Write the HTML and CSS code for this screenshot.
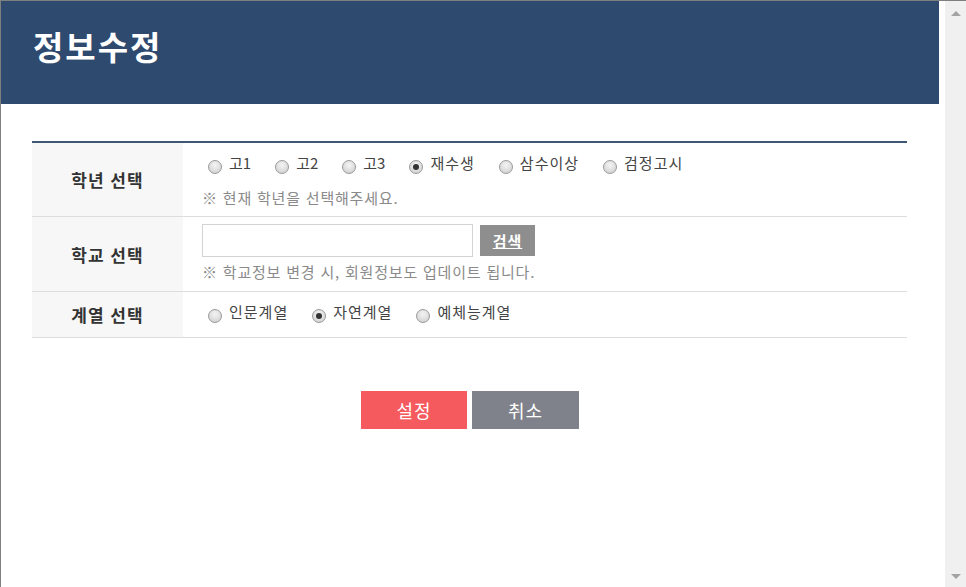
FILE: index.html
```html
<!DOCTYPE html>
<html lang="ko">
<head>
    <meta charset="UTF-8">
    <meta name="viewport" content="width=device-width, initial-scale=1.0">
    <title>정보수정</title>
    <link rel="stylesheet" href="styles.css">
</head>

<body>
    <div class="window">
        <div class="page">
            <div class="title-bar">
                <h1>정보수정</h1>
            </div>

            <div class="content">
                <div class="form-table">
                    <div class="row row-grade">
                        <div class="label">학년 선택</div>
                        <div class="value">
                            <div class="radios">
                                <span class="radio short"><i></i>고1</span>
                                <span class="radio short"><i></i>고2</span>
                                <span class="radio short"><i></i>고3</span>
                                <span class="radio checked"><i></i>재수생</span>
                                <span class="radio"><i></i>삼수이상</span>
                                <span class="radio"><i></i>검정고시</span>
                            </div>
                            <p class="note">※ 현재 학년을 선택해주세요.</p>
                        </div>
                    </div>

                    <div class="row row-school">
                        <div class="label">학교 선택</div>
                        <div class="value">
                            <div class="search">
                                <input type="text" id="school">
                                <button type="button" class="search-btn">검색</button>
                            </div>
                            <p class="note">※ 학교정보 변경 시, 회원정보도 업데이트 됩니다.</p>
                        </div>
                    </div>

                    <div class="row row-track">
                        <div class="label">계열 선택</div>
                        <div class="value">
                            <div class="radios">
                                <span class="radio"><i></i>인문계열</span>
                                <span class="radio checked"><i></i>자연계열</span>
                                <span class="radio"><i></i>예체능계열</span>
                            </div>
                        </div>
                    </div>
                </div>

                <div class="buttons">
                    <button type="button" class="btn btn-ok">설정</button>
                    <button type="button" class="btn btn-cancel">취소</button>
                </div>
            </div>
        </div>

        <!-- fake scrollbar of the popup -->
        <div class="scrollbar">
            <span class="arrow arrow-up"></span>
            <span class="arrow arrow-down"></span>
        </div>
    </div>
</body>
</html>
```

FILE: styles.css
```css
html, body {
    margin: 0;
    padding: 0;
    background-color: #ffffff;
}

body {
    font-family: "Noto Sans CJK KR", "Noto Sans", sans-serif;
    color: #333333;
}

.window {
    display: flex;
    gap: 6px;
    height: 586px;
    border-top: 1px solid #7f7f7f;
    border-left: 1px solid #7f7f7f;
    overflow: hidden;
}

.page {
    width: 938px;
    flex-shrink: 0;
}

.title-bar {
    height: 103px;
    box-sizing: border-box;
    padding: 29px 0 0 32px;
    background-color: #2e4a6e;
}

.title-bar h1 {
    margin: 0;
    font-size: 33px;
    line-height: 33px;
    letter-spacing: 2px;
    font-weight: bold;
    color: #ffffff;
}

.content {
    padding: 37px 32px 0 31px;
}

.form-table {
    border-top: 2px solid #405773;
}

.row {
    display: flex;
    border-bottom: 1px solid #dddddd;
}

.label {
    width: 151px;
    flex-shrink: 0;
    display: flex;
    align-items: center;
    justify-content: center;
    background-color: #f7f7f7;
    font-size: 17px;
    font-weight: bold;
    letter-spacing: 1px;
    color: #333333;
}

.value {
    flex: 1;
    padding-left: 19px;
}

.row-grade .value {
    padding-top: 9px;
    padding-bottom: 7px;
    height: 57px;
}

.row-grade .note {
    margin-top: 13px;
}

.row-school .value {
    padding-top: 7px;
    padding-bottom: 8px;
    height: 59px;
}

.row-school .note {
    margin-top: 4px;
}

.row-track .value {
    padding-top: 9px;
    height: 36px;
}

.radios {
    display: flex;
    height: 22px;
    padding-left: 6px;
}

.radio {
    display: flex;
    align-items: center;
    font-size: 15px;
    line-height: 22px;
    letter-spacing: 1px;
    color: #444444;
    margin-right: 24px;
}

.radio.short {
    letter-spacing: 0;
    margin-right: 24px;
}

.radio i {
    display: block;
    box-sizing: border-box;
    width: 14px;
    height: 14px;
    margin: 7px 7px 0 0;
    border: 1px solid #9a9a9a;
    border-radius: 50%;
    background: radial-gradient(circle at 50% 35%, #f4f4f4 0%, #dcdcdc 60%, #c8c8c8 100%);
    position: relative;
}

.radio.checked i::after {
    content: "";
    position: absolute;
    left: 3px;
    top: 3px;
    width: 6px;
    height: 6px;
    border-radius: 50%;
    background-color: #333333;
}

.note {
    margin: 0;
    font-size: 15px;
    line-height: 22px;
    letter-spacing: 0.8px;
    color: #8a8a8a;
}

.search {
    display: flex;
    align-items: flex-start;
}

.search input {
    width: 271px;
    height: 33px;
    box-sizing: border-box;
    margin: 0;
    border: 1px solid #d3d3d3;
    padding: 0 8px;
    font-family: inherit;
    font-size: 14px;
}

.search-btn {
    width: 55px;
    height: 31px;
    margin: 1px 0 0 7px;
    padding: 0;
    border: none;
    background-color: #8e8e8e;
    color: #ffffff;
    font-family: inherit;
    font-size: 15px;
    font-weight: bold;
    letter-spacing: 1px;
    text-decoration: underline;
    cursor: pointer;
}

.buttons {
    display: flex;
    justify-content: center;
    gap: 5px;
    margin-top: 53px;
    padding-left: 1px;
}

.btn {
    width: 106px;
    height: 38px;
    padding: 0;
    border: none;
    color: #ffffff;
    font-family: inherit;
    font-size: 18px;
    letter-spacing: 1px;
    cursor: pointer;
}

.btn-ok {
    background-color: #f55a5e;
}

.btn-cancel {
    width: 107px;
    background-color: #7f828b;
}

.scrollbar {
    width: 21px;
    flex-shrink: 0;
    display: flex;
    flex-direction: column;
    justify-content: space-between;
    align-items: center;
    padding: 10px 0 8px;
    background-color: #f0f0f0;
}

.arrow {
    width: 0;
    height: 0;
    border-left: 5px solid transparent;
    border-right: 5px solid transparent;
}

.arrow-up {
    border-bottom: 5px solid #a3a3a3;
}

.arrow-down {
    border-top: 5px solid #a3a3a3;
}
```
